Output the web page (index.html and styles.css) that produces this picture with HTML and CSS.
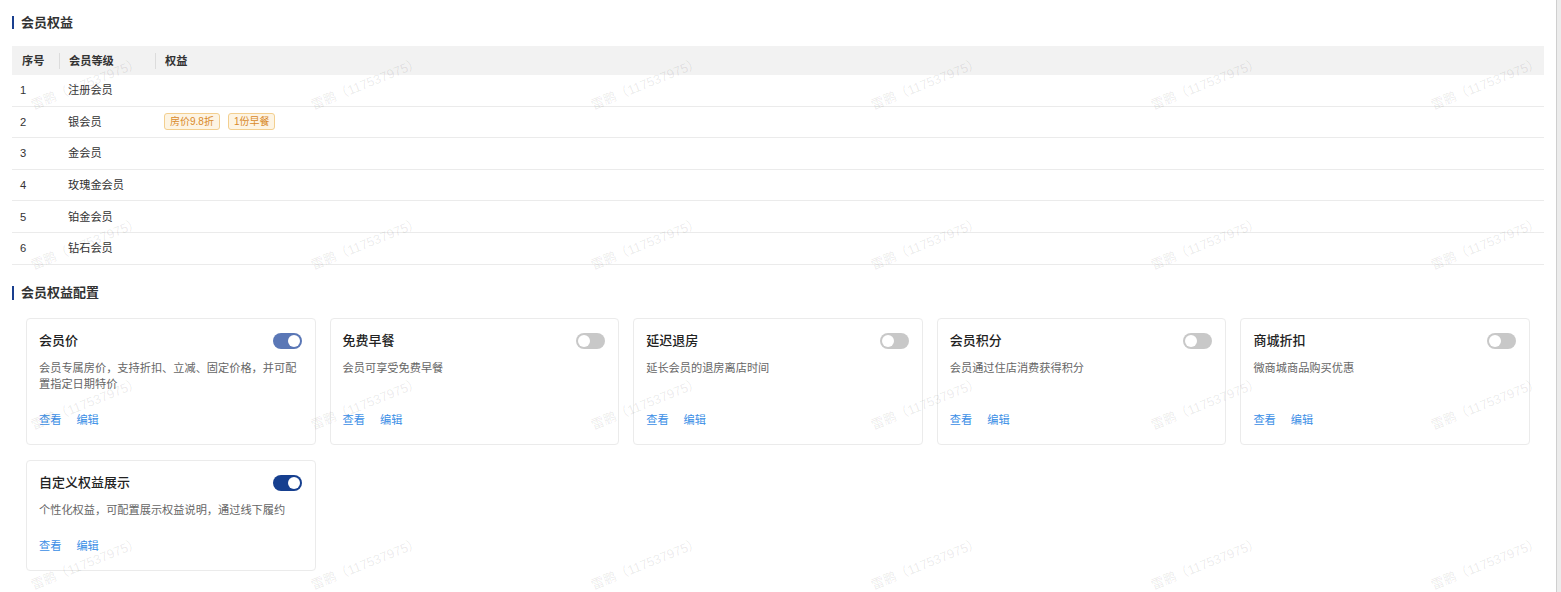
FILE: index.html
```html
<!DOCTYPE html>
<html lang="zh-CN">
<head>
<meta charset="utf-8">
<title>会员权益</title>
<link rel="stylesheet" href="styles.css">
</head>
<body>
<div class="page">
  <main class="main">
    <h2 class="section-title">会员权益</h2>
    <div class="table">
      <div class="row head">
        <div class="cell">序号</div>
        <div class="cell sep">会员等级</div>
        <div class="cell sep">权益</div>
      </div>
      <div class="row"><div class="cell num">1</div><div class="cell">注册会员</div><div class="cell"></div></div>
      <div class="row"><div class="cell num">2</div><div class="cell">银会员</div><div class="cell tags"><span class="tag">房价9.8折</span><span class="tag">1份早餐</span></div></div>
      <div class="row"><div class="cell num">3</div><div class="cell">金会员</div><div class="cell"></div></div>
      <div class="row"><div class="cell num">4</div><div class="cell">玫瑰金会员</div><div class="cell"></div></div>
      <div class="row"><div class="cell num">5</div><div class="cell">铂金会员</div><div class="cell"></div></div>
      <div class="row"><div class="cell num">6</div><div class="cell">钻石会员</div><div class="cell"></div></div>
    </div>

    <h2 class="section-title second">会员权益配置</h2>
    <div class="cards">
      <div class="card">
        <div class="card-head"><span class="card-title">会员价</span><span class="switch on light"><span class="knob"></span></span></div>
        <p class="desc">会员专属房价，支持折扣、立减、固定价格，并可配置指定日期特价</p>
        <div class="links"><a>查看</a><a>编辑</a></div>
      </div>
      <div class="card">
        <div class="card-head"><span class="card-title">免费早餐</span><span class="switch"><span class="knob"></span></span></div>
        <p class="desc">会员可享受免费早餐</p>
        <div class="links"><a>查看</a><a>编辑</a></div>
      </div>
      <div class="card">
        <div class="card-head"><span class="card-title">延迟退房</span><span class="switch"><span class="knob"></span></span></div>
        <p class="desc">延长会员的退房离店时间</p>
        <div class="links"><a>查看</a><a>编辑</a></div>
      </div>
      <div class="card">
        <div class="card-head"><span class="card-title">会员积分</span><span class="switch"><span class="knob"></span></span></div>
        <p class="desc">会员通过住店消费获得积分</p>
        <div class="links"><a>查看</a><a>编辑</a></div>
      </div>
      <div class="card">
        <div class="card-head"><span class="card-title">商城折扣</span><span class="switch"><span class="knob"></span></span></div>
        <p class="desc">微商城商品购买优惠</p>
        <div class="links"><a>查看</a><a>编辑</a></div>
      </div>
      <div class="card">
        <div class="card-head"><span class="card-title">自定义权益展示</span><span class="switch on"><span class="knob"></span></span></div>
        <p class="desc">个性化权益，可配置展示权益说明，通过线下履约</p>
        <div class="links"><a>查看</a><a>编辑</a></div>
      </div>
    </div>
  </main>
  <aside class="edge"></aside>

  <div class="watermark" aria-hidden="true">
    <span>雷鹏（117537975）</span><span>雷鹏（117537975）</span><span>雷鹏（117537975）</span><span>雷鹏（117537975）</span><span>雷鹏（117537975）</span><span>雷鹏（117537975）</span>
    <span>雷鹏（117537975）</span><span>雷鹏（117537975）</span><span>雷鹏（117537975）</span><span>雷鹏（117537975）</span><span>雷鹏（117537975）</span><span>雷鹏（117537975）</span>
    <span>雷鹏（117537975）</span><span>雷鹏（117537975）</span><span>雷鹏（117537975）</span><span>雷鹏（117537975）</span><span>雷鹏（117537975）</span><span>雷鹏（117537975）</span>
    <span>雷鹏（117537975）</span><span>雷鹏（117537975）</span><span>雷鹏（117537975）</span><span>雷鹏（117537975）</span><span>雷鹏（117537975）</span><span>雷鹏（117537975）</span>
  </div>
</div>
</body>
</html>
```

FILE: styles.css
```css
* { box-sizing: border-box; }

html, body {
  margin: 0;
  padding: 0;
  background: #fff;
}

body {
  font-family: "Liberation Sans", "Noto Sans CJK SC", sans-serif;
  font-size: 11.2px;
  color: #333;
  overflow: hidden;
}

.page {
  position: relative;
  display: flex;
  min-height: 592px;
}

.main {
  flex: 1;
  padding: 0 12px;
}

.edge {
  width: 5px;
  border-left: 1px solid #cfcfcf;
  background: #ececec;
}

.section-title {
  margin: 16px 0 0;
  height: 13px;
  line-height: 13px;
  border-left: 2px solid #1a3f8f;
  padding-left: 7px;
  font-size: 13px;
  font-weight: 700;
  color: #333;
}

.section-title.second {
  margin-top: 21px;
  height: 14px;
  line-height: 14px;
}

/* table */
.table {
  margin-top: 17px;
}

.row {
  display: grid;
  grid-template-columns: 47px 96px 1fr;
  height: 31.6px;
  border-bottom: 1px solid #ebebeb;
  align-items: center;
}

.row.head {
  height: 29px;
  background: #f2f2f2;
  border-bottom: none;
  font-weight: 700;
  color: #333;
}

.cell {
  padding: 0 9px;
  line-height: 16px;
  white-space: nowrap;
}

.row.head .cell {
  padding: 0 10px;
}

.cell.num {
  padding-left: 8px;
}

.cell.sep {
  position: relative;
}

.cell.sep::before {
  content: "";
  position: absolute;
  left: 0;
  top: 0;
  width: 1px;
  height: 16px;
  background: #dcdcdc;
}

.tags {
  display: flex;
  gap: 8px;
}

.tag {
  display: inline-flex;
  align-items: center;
  height: 17px;
  padding: 0 5px;
  font-size: 10px;
  line-height: 15px;
  color: #d98a2a;
  background: #fdf4e3;
  border: 1px solid #f3cf8f;
  border-radius: 3px;
}

/* cards */
.cards {
  margin-top: 18px;
  padding: 0 14px;
  display: grid;
  grid-template-columns: repeat(5, 1fr);
  column-gap: 14px;
  row-gap: 15px;
}

.card {
  display: flex;
  flex-direction: column;
  border: 1px solid #ebebeb;
  border-radius: 4px;
  background: #fff;
  padding: 13px 13px 16px 12px;
}

.card-head {
  display: flex;
  align-items: center;
  justify-content: space-between;
  height: 18px;
}

.card-title {
  font-size: 13px;
  font-weight: 500;
  color: #222;
  line-height: 18px;
}

.switch {
  display: flex;
  align-items: center;
  width: 29px;
  height: 16px;
  padding: 2px;
  border-radius: 8px;
  background: #c8c8c8;
}

.switch.on {
  justify-content: flex-end;
  background: #163f8f;
}

.switch.on.light {
  background: #5a77b6;
}

.knob {
  width: 12px;
  height: 12px;
  border-radius: 50%;
  background: #fff;
}

.desc {
  margin: 10px 0 0;
  font-size: 11.2px;
  line-height: 16px;
  color: #666;
}

.links {
  margin-top: auto;
  padding-top: 20px;
  display: flex;
  gap: 15px;
  line-height: 16px;
}

.links a {
  color: #3a8ee6;
  cursor: pointer;
}

/* watermark overlay */
.watermark {
  position: absolute;
  inset: 0;
  overflow: hidden;
  pointer-events: none;
  display: grid;
  grid-template-columns: repeat(6, 280px);
  grid-auto-rows: 160px;
  padding: 98px 0 0 32px;
}

.watermark span {
  display: block;
  height: 16px;
  line-height: 16px;
  font-size: 13px;
  white-space: nowrap;
  color: rgba(0, 0, 0, 0.09);
  transform: rotate(-22deg);
  transform-origin: 0 50%;
}
```
